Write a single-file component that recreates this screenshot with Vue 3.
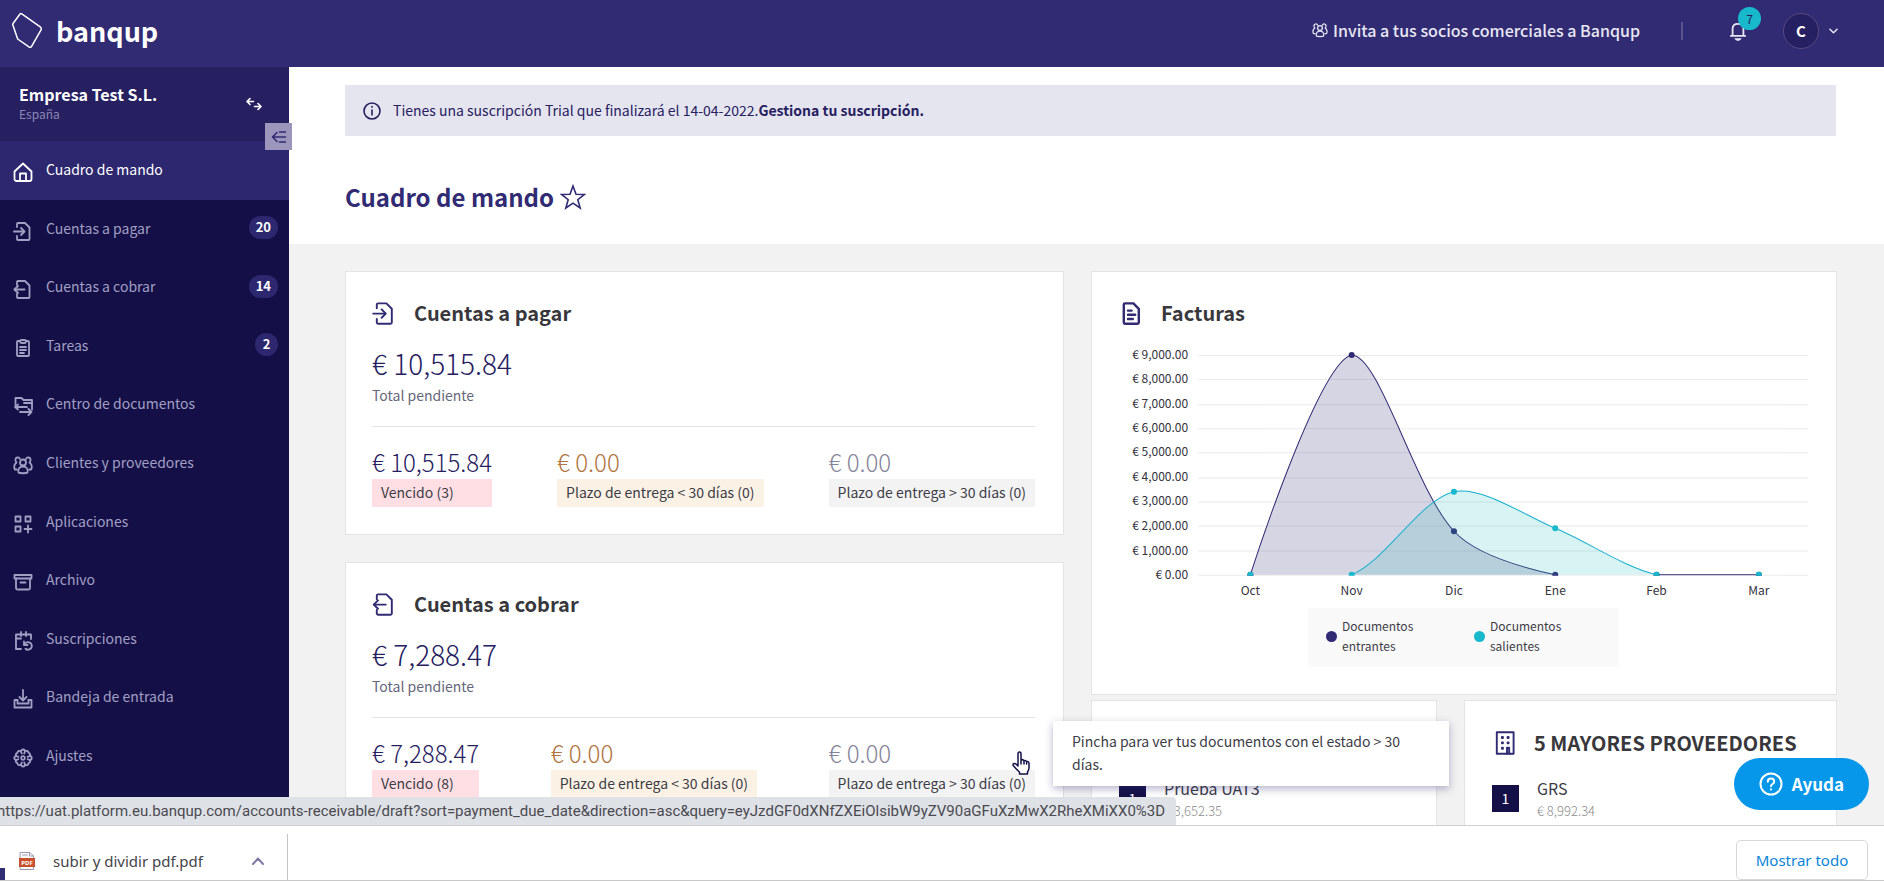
<script setup>
const icons = {
  home: ['M1.5 9.5 10 1.5l8.500 8V17a2 2 0 0 1-2 2h-13a2 2 0 0 1-2-2z', 'M7 19v-7.500h6V19'],
  payable: ['M4 6V3a1 1 0 0 1 1-1h7l4.500 4.500V18a1 1 0 0 1-1 1H5a1 1 0 0 1-1-1v-3', 'M1 10.500h10', 'M8 7l3.500 3.500L8 14'],
  receivable: ['M4 6V3a1 1 0 0 1 1-1h7l4.500 4.500V18a1 1 0 0 1-1 1H5a1 1 0 0 1-1-1v-3', 'M11.500 10.500H1.500', 'M5 7l-3.500 3.500L5 14'],
  tasks: ['M7 3H5a1 1 0 0 0-1 1v13a1 1 0 0 0 1 1h10a1 1 0 0 0 1-1V4a1 1 0 0 0-1-1h-2', 'M7 3.500a1.500 1.500 0 0 1 1.500-1.500h3a1.500 1.500 0 0 1 0 3h-3A1.500 1.500 0 0 1 7 3.500z', 'M7 9h6M7 12h6M7 15h4'],
  docs: ['M2.500 9V2h6l2 2H19v9.500', 'M11 7h8', 'M14 11H2.500M5 8.500l-3 2.500 3 2.500', 'M7 16h11M15.500 13l3 3-3 3'],
  people: ['M10 4.500a3 3 0 1 1 0 6 3 3 0 0 1 0-6z', 'M5.500 17.500c-1-4 1.500-6 4.500-6s5.500 2 4.500 6c-1 1-8 1-9 0z', 'M7 4C6 1.500 2 2 2.500 5.500c.2 1 .5 1.500 1 2C1.500 9 .8 12 1.800 14.500h2', 'M13 4c1-2.500 5-2 4.500 1.500-.2 1-.5 1.500-1 2 2 1.500 2.700 4.500 1.700 7h-2'],
  apps: ['M2.500 2.500h5v5h-5z', 'M12.500 2.500h5v5h-5z', 'M2.500 12.500h5v5h-5z', 'M15 11.500v7M11.500 15h7'],
  archive: ['M1.500 3h17v3.500h-17z', 'M3 6.500V16a1.500 1.500 0 0 0 1.500 1.500h11A1.500 1.500 0 0 0 17 16V6.500', 'M7.500 10.500h5'],
  subs: ['M8 18H3V3.500h15V8', 'M3 7.500h5', 'M8 1v4M13 1v4', 'M11 10.500v3.500h3.500', 'M11.500 13.500a3.800 3.800 0 1 1 1 4.300'],
  inbox: ['M10 1v10', 'M6.500 8l3.500 3.500L13.500 8', 'M4.500 11H1.500v7.500h17V11h-3', 'M4.500 11v3.500h11V11'],
  gear: ['M8 3.500a2 2 0 0 1 4 0 2 2 0 0 1 3.500 1.300 2 2 0 0 1 1.200 3.200 2 2 0 0 1 0 4 2 2 0 0 1-1.200 3.200A2 2 0 0 1 12 16.500a2 2 0 0 1-4 0 2 2 0 0 1-3.500-1.300A2 2 0 0 1 3.300 12a2 2 0 0 1 0-4 2 2 0 0 1 1.200-3.200A2 2 0 0 1 8 3.500z', 'M8 3.500l.8 2M12 3.500l-.8 2M8 16.500l.8-2M12 16.500l-.8-2M3.300 8l2 .8M3.300 12l2-.8M16.700 8l-2 .8M16.700 12l-2-.8', 'M10 8.200a1.800 1.800 0 1 1 0 3.600 1.800 1.800 0 0 1 0-3.600z'],
  invoice: ['M4 3a1 1 0 0 1 1-1h7l4.500 4.500V18a1 1 0 0 1-1 1H5a1 1 0 0 1-1-1z', 'M7.500 8h3M7.500 11.500h6M7.500 15h4'],
  building: ['M4 1h14v18H4z', 'M8.300 5h.8v.8h-.8zM13 5h.8v.8H13z', 'M8.300 9.500h.8v.8h-.8zM13 9.500h.8v.8H13z', 'M8.300 14h.8v.8h-.8z', 'M12.500 19v-5h1.800v5'],
}

const menu = [
  { label: 'Cuadro de mando', icon: 'home', active: true },
  { label: 'Cuentas a pagar', icon: 'payable', count: 20 },
  { label: 'Cuentas a cobrar', icon: 'receivable', count: 14 },
  { label: 'Tareas', icon: 'tasks', count: 2 },
  { label: 'Centro de documentos', icon: 'docs' },
  { label: 'Clientes y proveedores', icon: 'people' },
  { label: 'Aplicaciones', icon: 'apps' },
  { label: 'Archivo', icon: 'archive' },
  { label: 'Suscripciones', icon: 'subs' },
  { label: 'Bandeja de entrada', icon: 'inbox' },
  { label: 'Ajustes', icon: 'gear' },
]

const balances = [
  {
    title: 'Cuentas a pagar', icon: 'payable', total: '€ 10,515.84',
    parts: [
      { kind: 'overdue', amount: '€ 10,515.84', label: 'Vencido (3)' },
      { kind: 'soon', amount: '€ 0.00', label: 'Plazo de entrega < 30 días (0)' },
      { kind: 'later', amount: '€ 0.00', label: 'Plazo de entrega > 30 días (0)' },
    ],
  },
  {
    title: 'Cuentas a cobrar', icon: 'receivable', total: '€ 7,288.47',
    parts: [
      { kind: 'overdue', amount: '€ 7,288.47', label: 'Vencido (8)' },
      { kind: 'soon', amount: '€ 0.00', label: 'Plazo de entrega < 30 días (0)' },
      { kind: 'later', amount: '€ 0.00', label: 'Plazo de entrega > 30 días (0)' },
    ],
  },
]

// Chart geometry, in the units of its viewBox
const top = 15
const base = 234
const tension = 0.3
const months = ['Oct', 'Nov', 'Dic', 'Ene', 'Feb', 'Mar']
const xAt = (i) => 131 + Math.round(i * 101.3)
const yAt = (v) => base - (v / 9000) * (base - top)
const ticks = [9, 8, 7, 6, 5, 4, 3, 2, 1, 0].map((k) => ({
  y: Math.round(yAt(k * 1000)),
  label: k ? `€ ${k},000.00` : '€ 0.00',
}))
const clamp = (y) => Math.max(top, Math.min(base, y))

// Smooth path through the values; the segments listed in gaps are skipped
function curve(values, gaps = []) {
  const p = values.map((v, i) => [xAt(i), yAt(v)])
  const cps = p.map((c, i) => {
    const a = p[i - 1] || c
    const b = p[i + 1] || c
    const d0 = Math.hypot(c[0] - a[0], c[1] - a[1])
    const d1 = Math.hypot(b[0] - c[0], b[1] - c[1])
    const f0 = (tension * d0) / (d0 + d1)
    const f1 = (tension * d1) / (d0 + d1)
    if (i === 0) return [c, c]
    return [
      [c[0] - f0 * (b[0] - a[0]), clamp(c[1] - f0 * (b[1] - a[1]))],
      [c[0] + f1 * (b[0] - a[0]), clamp(c[1] + f1 * (b[1] - a[1]))],
    ]
  })
  let d = `M${p[0]}`
  for (let i = 1; i < p.length; i++) d += gaps.includes(i) ? `M${p[i]}` : `C${cps[i - 1][1]} ${cps[i][0]} ${p[i]}`
  return d
}

const series = [
  { name: 'Documentos entrantes', kind: 'incoming', values: [0, 9000, 1780, 0, 0, 0], gaps: [4] },
  { name: 'Documentos salientes', kind: 'outgoing', values: [0, 0, 3400, 1900, 0, 0], gaps: [1, 5] },
].map((s) => ({
  ...s,
  area: curve(s.values),
  line: curve(s.values, s.gaps),
  dots: s.values.map((v, i) => [xAt(i), yAt(v)]),
}))
</script>

<template>
  <div class="app">
    <header class="topbar">
      <a class="brand" href="#">
        <svg class="brand-mark" viewBox="0 0 34 40" aria-hidden="true">
          <path d="M10 1.500 30 15.500q1.500 1.200 1 3L21 36q-1 2-3 .8L6 28.500 1 14q-.5-1 .3-2.200L8.500 2q.7-1 1.500-.5z" />
        </svg>
        <span>banqup</span>
      </a>
      <div class="top-actions">
        <a class="invite" href="#">
          <svg viewBox="0 0 20 20" aria-hidden="true"><path v-for="d in icons.people" :key="d" :d="d" /></svg>
          Invita a tus socios comerciales a Banqup
        </a>
        <span class="bar"></span>
        <button class="bell" type="button" aria-label="Notificaciones">
          <svg viewBox="0 0 20 24" aria-hidden="true">
            <path d="M2 17.500h16M4 17V9.500Q4 4 10 4t6 5.500V17" /><path class="solid" d="M6 20h8q-1 3-4 3t-4-3z" />
          </svg>
          <span class="bell-count">7</span>
        </button>
        <button class="user" type="button">
          <span class="avatar">C</span>
          <svg viewBox="0 0 10 6" aria-hidden="true"><path d="M1 1l4 4 4-4" /></svg>
        </button>
      </div>
    </header>

    <div class="workspace">
      <aside class="sidebar">
        <div class="company">
          <div>
            <strong>Empresa Test S.L.</strong>
            <small>España</small>
          </div>
          <button class="swap" type="button" aria-label="Cambiar de empresa">
            <svg viewBox="0 0 16 14" aria-hidden="true"><path d="M7.500 4.500H1M4 1.500 1 4.500l3 3M8.500 9.500H15M12 6.500l3 3-3 3" /></svg>
          </button>
        </div>
        <nav class="menu">
          <a v-for="m in menu" :key="m.label" href="#" :class="{ active: m.active }">
            <svg viewBox="0 0 20 20" aria-hidden="true"><path v-for="d in icons[m.icon]" :key="d" :d="d" /></svg>
            <span class="menu-label">{{ m.label }}</span>
            <span v-if="m.count" class="count">{{ m.count }}</span>
          </a>
        </nav>
        <button class="collapse" type="button" aria-label="Contraer menú">
          <svg viewBox="0 0 16 14" aria-hidden="true"><path d="M1.500 7H14.500M6 2.500 1.500 7 6 11.500M8.500 2h6M8.500 12h6" /></svg>
        </button>
      </aside>

      <main class="main">
        <div class="intro">
          <div class="notice">
            <svg viewBox="0 0 20 20" aria-hidden="true"><circle cx="10" cy="10" r="8" /><path d="M10 9v5M10 5.500v.8" /></svg>
            <p>Tienes una suscripción Trial que finalizará el 14-04-2022.<a href="#">Gestiona tu suscripción.</a></p>
          </div>
          <div class="title">
            <h1>Cuadro de mando</h1>
            <button type="button" aria-label="Marcar como favorito">
              <svg viewBox="0 0 26 26" aria-hidden="true"><path d="M13 2l3 8.200 8.500.2-6.700 5.300 2.400 8.300L13 19.200 5.800 24l2.400-8.300L1.500 10.400l8.500-.2z" /></svg>
            </button>
          </div>
        </div>

        <div class="board">
          <div class="column">
            <section v-for="b in balances" :key="b.title" class="card balance">
              <header class="card-head">
                <svg viewBox="0 0 20 20" aria-hidden="true"><path v-for="d in icons[b.icon]" :key="d" :d="d" /></svg>
                <h2>{{ b.title }}</h2>
              </header>
              <p class="total">{{ b.total }}</p>
              <p class="caption">Total pendiente</p>
              <div class="parts">
                <a v-for="p in b.parts" :key="p.kind" href="#" :class="p.kind">
                  <span class="amount">{{ p.amount }}</span>
                  <span class="tag">{{ p.label }}</span>
                </a>
              </div>
            </section>
          </div>

          <div class="column tight">
            <section class="card invoices">
              <header class="card-head">
                <svg class="heavy" viewBox="0 0 20 20" aria-hidden="true"><path v-for="d in icons.invoice" :key="d" :d="d" /></svg>
                <h2>Facturas</h2>
              </header>
              <svg class="chart" viewBox="0 0 688 262" role="img" aria-label="Facturas por mes">
                <defs><clipPath id="plot"><rect x="79" y="0" width="609" height="235" /></clipPath></defs>
                <g v-for="t in ticks" :key="t.y">
                  <line class="grid" x1="79" x2="687" :y1="t.y + 0.5" :y2="t.y + 0.5" />
                  <text x="69" :y="t.y + 4" text-anchor="end">{{ t.label }}</text>
                </g>
                <g clip-path="url(#plot)">
                  <g v-for="s in series" :key="s.kind" :class="s.kind">
                    <path class="area" :d="s.area" />
                    <path class="stroke" :d="s.line" />
                    <circle v-for="c in s.dots" :key="c[0]" :cx="c[0]" :cy="c[1]" r="3" />
                  </g>
                </g>
                <text v-for="(m, i) in months" :key="m" :x="xAt(i)" y="254" text-anchor="middle">{{ m }}</text>
              </svg>
              <ul class="legend">
                <li v-for="s in series" :key="s.kind" :class="s.kind"><i></i><span>{{ s.name }}</span></li>
              </ul>
            </section>

            <div class="rankings">
              <section class="card ranking">
                <div class="card-head"></div>
                <div class="rank">
                  <b>1</b>
                  <p>Prueba UAT3<small>€ 3,652.35</small></p>
                </div>
              </section>
              <section class="card ranking">
                <header class="card-head">
                  <svg viewBox="0 0 20 20" aria-hidden="true"><path v-for="d in icons.building" :key="d" :d="d" /></svg>
                  <h2>5 MAYORES PROVEEDORES</h2>
                </header>
                <div class="rank">
                  <b>1</b>
                  <p>GRS<small>€ 8,992.34</small></p>
                </div>
              </section>
            </div>
          </div>
        </div>
      </main>

      <div class="tooltip" role="tooltip">Pincha para ver tus documentos con el estado &gt; 30 días.</div>
      <svg class="pointer" viewBox="0 0 18 24" aria-hidden="true">
        <path d="M6 14V3q0-2 1.500-2T9 3v6q2-1 3 .8 2-.8 2.600.8Q17 10 17 12.500V17q0 2-1.500 4v2h-8v-2Q5 19 1.200 14.500q-.6-2 1.300-2Q4 12.500 6 15M9 9v4M12 10v3M14.600 10.600V13" />
      </svg>
      <button class="help" type="button">
        <svg viewBox="0 0 24 24" aria-hidden="true"><circle cx="12" cy="12" r="10.500" /><path d="M8.800 9.800q0-3.200 3.200-3.200t3.200 2.800q0 1.500-1.700 2.600-1.500 1-1.500 2.200M12 17.300v.2" /></svg>
        Ayuda
      </button>
      <div class="status">https://uat.platform.eu.banqup.com/accounts-receivable/draft?sort=payment_due_date&amp;direction=asc&amp;query=eyJzdGF0dXNfZXEiOlsibW9yZV90aGFuXzMwX2RheXMiXX0%3D</div>
    </div>

    <footer class="downloads">
      <button class="file" type="button">
        <svg class="pdf" viewBox="0 0 16 18" aria-hidden="true">
          <path class="sheet" d="M1.500.5h9.500l3.500 3.500v13.500h-13z" /><path class="sheet" d="M10.500.5V4h4M3.500 3h5" />
          <rect x="0" y="6" width="16" height="9" /><text x="8" y="13" text-anchor="middle">PDF</text>
        </svg>
        <span>subir y dividir pdf.pdf</span>
        <svg class="caret" viewBox="0 0 12 8" aria-hidden="true"><path d="M1 7l5-5.500L11 7" /></svg>
      </button>
      <button class="show-all" type="button">Mostrar todo</button>
      <i class="corner"></i>
    </footer>
  </div>
</template>

<style>
html, body { margin: 0; }
</style>

<style scoped>
* { box-sizing: border-box; }
.app { height: 100vh; display: flex; flex-direction: column; overflow: hidden; font-family: "Noto Sans CJK SC", "Noto Sans", sans-serif; font-size: 14px; line-height: 20px; color: #3c3c46; background: #fff; }
p, h1, h2, ul { margin: 0; padding: 0; }
a { color: inherit; text-decoration: none; }
button { font: inherit; color: inherit; background: none; border: 0; padding: 0; margin: 0; cursor: pointer; }
svg { display: block; flex: none; fill: none; stroke: currentColor; stroke-width: 1.600; stroke-linejoin: round; stroke-linecap: round; }

.topbar { flex: none; height: 67px; background: #312b74; color: #e8e7f1; display: flex; align-items: center; justify-content: space-between; padding: 0 46px 6px 12px; }
.brand { display: flex; align-items: center; gap: 12px; font: bold 27px/40px "Noto Sans CJK SC", sans-serif; color: #fff; }
.brand-mark { width: 32px; height: 38px; }
.top-actions { display: flex; align-items: center; }
.invite { display: flex; align-items: center; gap: 5px; padding-bottom: 2px; font-size: 16px; font-weight: 500; }
.invite svg { width: 16px; height: 16px; }
.bar { width: 2px; height: 18px; background: #59538f; margin: 0 46px 0 41px; }
.bell { position: relative; width: 18px; height: 24px; }
.bell svg { width: 18px; height: 22px; stroke-width: 2; }
.bell .solid { fill: currentColor; stroke: none; }
.bell-count { position: absolute; left: 9px; top: -12px; width: 23px; height: 23px; border-radius: 50%; background: #19b9cc; color: #262061; font-size: 12px; line-height: 23px; text-align: center; }
.user { display: flex; align-items: center; gap: 10px; margin-left: 36px; }
.user svg { width: 9px; height: 6px; }
.avatar { width: 36px; height: 36px; border-radius: 50%; background: #252062; border: 1px solid #59497f; font-size: 15px; font-weight: 600; line-height: 34px; text-align: center; color: #fff; }

.workspace { flex: 1; min-height: 0; display: flex; position: relative; overflow: hidden; }
.sidebar { position: relative; flex: none; width: 289px; background: #141047; color: #a29fc4; display: flex; flex-direction: column; }
.company { height: 74px; flex: none; background: #262061; display: flex; align-items: center; justify-content: space-between; padding: 0 27px 0 19px; }
.company strong { display: block; font-size: 16px; color: #fff; }
.company small { display: block; font-size: 12px; color: #8b87b4; }
.swap { color: #fff; }
.swap svg { width: 16px; height: 14px; }
.menu { flex: 1; display: grid; grid-template-rows: repeat(11, 1fr); padding-bottom: 40px; }
.menu a { display: flex; align-items: center; gap: 13px; padding: 0 11px 2px 13px; }
.menu a.active { background: #2d2770; color: #fff; }
.menu svg { width: 20px; height: 20px; margin-top: 6px; stroke-width: 1.800; }
.menu-label { flex: 1; }
.count { min-width: 23px; height: 23px; padding: 0 7px; border-radius: 12px; background: #2d2770; color: #fff; font-size: 13px; font-weight: 700; line-height: 22px; text-align: center; }
.collapse { position: absolute; right: -3px; top: 56px; z-index: 2; width: 27px; height: 27px; background: #9c96bd; color: #312b74; display: grid; place-items: center; }
.collapse svg { width: 16px; height: 14px; }

.main { flex: 1; min-width: 0; background: #f2f2f2; }
.intro { background: #fff; height: 177px; padding: 18px 48px 0 56px; }
.notice { height: 51px; background: #e5e5ef; display: flex; align-items: center; gap: 11px; padding: 0 17px; color: #262061; }
.notice p { padding-bottom: 2px; }
.notice svg { width: 20px; height: 20px; }
.notice a { font-weight: 600; }
.title { display: flex; align-items: center; gap: 6px; margin-top: 44px; color: #312b74; }
.title h1 { font-size: 24px; line-height: 34px; font-weight: 700; }
.title svg { width: 26px; height: 26px; stroke-linejoin: miter; }
.board { display: grid; grid-template-columns: 719fr 746fr; gap: 27px; align-items: start; padding: 27px 47px 0 56px; }
.column { display: grid; gap: 27px; }
.column.tight { gap: 5px; }
.card { background: #fff; border: 1px solid #e4e4e4; padding: 26px 27px 27px; }
.card.balance { padding: 26px 28px 27px 26px; }
.card-head { display: flex; align-items: center; gap: 18px; height: 30px; }
.card-head svg { width: 24px; height: 24px; color: #312b74; }
.card-head .heavy { stroke-width: 2; }
.card-head h2 { font-size: 20px; line-height: 30px; font-weight: 700; color: #38383c; }
.total { font-size: 28px; line-height: 40px; font-weight: 200; color: #262061; margin-top: 15px; }
.caption { color: #66667a; margin-top: 2px; }
.parts { display: flex; justify-content: space-between; border-top: 1px solid #e4e4e4; margin-top: 21px; padding-top: 19px; }
.amount { display: block; font-size: 24px; line-height: 32px; font-weight: 200; color: #262061; }
.tag { display: block; margin-top: 1px; padding: 0 9px 2px; line-height: 26px; white-space: nowrap; }
.overdue .tag { background: #ffdfe3; }
.soon .tag { background: #fbf1e4; }
.soon .amount { color: #b07440; }
.later .tag { background: #f3f3f3; }
.later .amount { color: #85859a; }

.chart { width: 100%; height: auto; margin-top: 12px; }
.chart text { font-size: 12px; fill: #33333d; stroke: none; }
.grid { stroke: #ececee; stroke-width: 1; }
.area { stroke: none; }
.stroke { stroke-width: 1; }
.incoming .area { fill: #312b74; fill-opacity: 0.200; }
.incoming .stroke { stroke: #312b74; }
.incoming circle { fill: #312b74; stroke: none; }
.outgoing .area { fill: #19b9b9; fill-opacity: 0.170; }
.outgoing .stroke { stroke: #19b0d0; }
.outgoing circle { fill: #19b9cc; stroke: none; }
.legend { list-style: none; width: 311px; height: 59px; margin: 5px auto 0 189px; padding: 0 18px 2px; display: flex; gap: 27px; align-items: center; background: #f9f9f9; }
.legend li { display: flex; align-items: center; gap: 5px; width: 121px; font-size: 12px; }
.legend i { width: 11px; height: 11px; border-radius: 50%; flex: none; }
.legend span { width: 80px; }
.incoming i { background: #312b74; }
.outgoing i { background: #19b9cc; }

.rankings { display: grid; grid-template-columns: 346fr 373fr; gap: 27px; }
.ranking { height: 240px; padding-top: 27px; }
.rank { display: flex; gap: 18px; margin-top: 18px; }
.rank b { width: 27px; height: 27px; margin-top: 9px; background: #141047; color: #fff; font-size: 14px; font-weight: 400; line-height: 27px; text-align: center; }
.rank p { font-size: 16px; line-height: 24px; }
.rank small { display: block; font-size: 13px; line-height: 22px; font-weight: 300; color: #8c8c8c; }

.tooltip { position: absolute; left: 1053px; bottom: 39px; width: 396px; padding: 9px 19px 10px; line-height: 23px; background: #fff; box-shadow: 0 3px 8px rgba(49, 43, 116, 0.350); }
.pointer { position: absolute; left: 1012px; bottom: 50px; width: 18px; height: 24px; fill: #fff; color: #141047; stroke-width: 1.500; }
.help { position: absolute; right: 15px; bottom: 15px; height: 52px; padding: 0 25px; border-radius: 26px; background: #0696ea; color: #fff; font-size: 17px; font-weight: 700; display: flex; align-items: center; gap: 9px; }
.help svg { width: 24px; height: 24px; stroke-width: 2; }
.status { position: absolute; left: 0; bottom: 0; height: 28px; padding-right: 11px; text-indent: -3px; border-radius: 0 4px 0 0; background: #dee1e6; color: #4a4a50; font: 15px/28px Roboto, sans-serif; white-space: nowrap; }

.downloads { position: relative; flex: none; height: 56px; border-top: 1px solid #d0d0d0; border-bottom: 1px solid #c8c8c8; display: flex; justify-content: space-between; align-items: flex-end; padding-right: 16px; font-family: "Noto Sans", sans-serif; font-size: 15px; }
.file { width: 288px; height: 46px; border-right: 1px solid #c4c4c4; display: flex; align-items: center; padding: 7px 23px 0 19px; color: #44444a; }
.file span { flex: 1; text-align: left; padding-left: 18px; }
.pdf { width: 16px; height: 18px; stroke-width: 1; }
.sheet { stroke: #9a98b0; }
.pdf rect { fill: #c8502c; stroke: none; }
.pdf text { font-size: 6px; font-weight: 700; fill: #fff; stroke: none; }
.caret { width: 12px; height: 8px; color: #7f7aa4; stroke-width: 2; }
.show-all { width: 132px; height: 40px; border: 1px solid #d4d7dc; border-radius: 5px; color: #0b84d8; }
.corner { position: absolute; left: 0; bottom: 0; width: 5px; height: 12px; background: #312b74; }
</style>
